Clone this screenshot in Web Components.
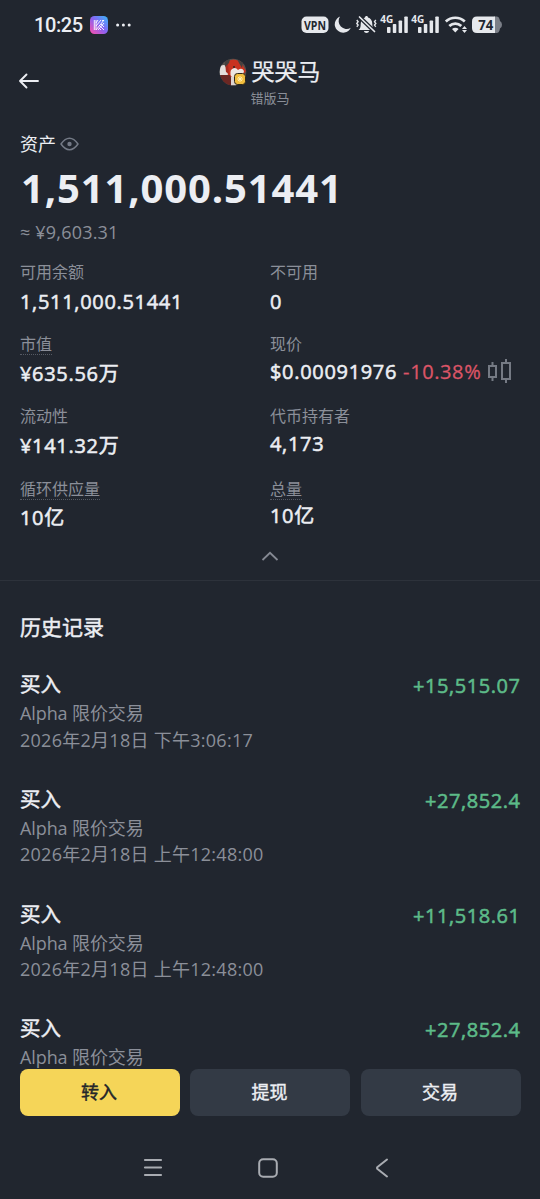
<!DOCTYPE html>
<html lang="zh-CN">
<head>
<meta charset="utf-8">
<title>哭哭马</title>
<style>
  body {
    margin: 0;
    background: #21262f;
  }
</style>
</head>
<body>
<token-page>
  <status-bar slot="top" time="10:25"></status-bar>
  <token-header slot="top" name="哭哭马" subtitle="错版马"></token-header>
  <asset-balance slot="top" amount="1,511,000.51441" fiat="≈ ¥9,603.31">资产</asset-balance>
  <stat-grid slot="top">
    <stat-item label="可用余额" first>1,511,000.51441</stat-item>
    <stat-item label="不可用" first>0</stat-item>
    <stat-item label="市值" hint low>¥635.56万</stat-item>
    <stat-item label="现价" change="-10.38%">$0.00091976</stat-item>
    <stat-item label="流动性" low>¥141.32万</stat-item>
    <stat-item label="代币持有者">4,173</stat-item>
    <stat-item label="循环供应量" hint low>10亿</stat-item>
    <stat-item label="总量" hint high>10亿</stat-item>
  </stat-grid>
  <history-list heading="历史记录">
    <history-row type="买入" source="Alpha 限价交易" date="2026年2月18日 下午3:06:17" amount="+15,515.07"></history-row>
    <history-row type="买入" source="Alpha 限价交易" date="2026年2月18日 上午12:48:00" amount="+27,852.4"></history-row>
    <history-row type="买入" source="Alpha 限价交易" date="2026年2月18日 上午12:48:00" amount="+11,518.61"></history-row>
    <history-row type="买入" source="Alpha 限价交易" date="" amount="+27,852.4"></history-row>
  </history-list>
  <action-bar slot="bottom">
    <action-button primary>转入</action-button>
    <action-button>提现</action-button>
    <action-button>交易</action-button>
  </action-bar>
  <nav-bar slot="bottom"></nav-bar>
</token-page>

<script>
const render = (host, html) => {
  const template = document.createElement("template");
  template.innerHTML = html;
  host.attachShadow({ mode: "open" }).appendChild(template.content.cloneNode(true));
};

class TokenPage extends HTMLElement {
  connectedCallback() {
    render(this, `
      <style>
        :host {
          --text: #eceef3;
          --muted: #8b8f99;
          --green: #5dbb89;
          --red: #dc5567;
          --medium: 0.55px;
          display: flex;
          flex-direction: column;
          height: 1199px;
          overflow: hidden;
          color: var(--text);
          font-family: "Open Sans", "Noto Sans CJK SC", sans-serif;
        }
        main { flex: 1; min-height: 0; overflow: hidden; }
      </style>
      <slot name="top"></slot>
      <main><slot></slot></main>
      <slot name="bottom"></slot>
    `);
  }
}
customElements.define("token-page", TokenPage);

class StatusBar extends HTMLElement {
  connectedCallback() {
    render(this, `
      <style>
        :host {
          display: flex;
          align-items: center;
          justify-content: space-between;
          height: 50px;
          padding: 0 38px 0 34px;
          font-family: Roboto, sans-serif;
        }
        .left { display: flex; align-items: center; }
        .time { font-size: 20px; font-weight: 500; letter-spacing: -0.4px; width: 56px; }
        svg { display: block; flex: none; overflow: visible; }
        .app { margin-right: 8px; }
        text { font-family: "Open Sans", sans-serif; font-weight: 700; }
      </style>
      <div class="left">
        <span class="time">${this.getAttribute("time")}</span>
        <svg class="app" width="18" height="18" viewBox="0 0 18 18">
          <defs>
            <linearGradient id="g" x1="0" y1="1" x2="1" y2="0">
              <stop offset="0" stop-color="#ff4fa8"/>
              <stop offset=".5" stop-color="#8a62f2"/>
              <stop offset="1" stop-color="#35b8fa"/>
            </linearGradient>
          </defs>
          <rect width="18" height="18" rx="4.5" fill="url(#g)"/>
          <path d="M4.3 4v10M6 4v10M8 4l-2 3M11 4L6 10M14 4L6 14M14 7l-6 7M9 9l5 5M11 8l3 3M12 4.5h2M11 14l-2-2" fill="none" stroke="#fff" stroke-width=".9"/>
        </svg>
        <svg width="17" height="4" viewBox="0 0 17 4" fill="#eceef3">
          <circle cx="1.600" cy="2" r="1.500"/><circle cx="7.400" cy="2" r="1.500"/><circle cx="13.200" cy="2" r="1.500"/>
        </svg>
      </div>
      <svg width="202" height="30" viewBox="300 10 202 30" fill="#e6e8ec">
        <rect x="301.500" y="16.500" width="27" height="16.500" rx="5"/>
        <text x="304" y="29.600" font-size="13" textLength="22" lengthAdjust="spacingAndGlyphs" fill="#21262f">VPN</text>
        <path d="M340 16.500a8.400 8.400 0 1 0 10.800 11.300a8 8 0 0 1-10.800-11.300z"/>
        <path d="M358.500 30c1.800-1.400 2.200-3 2.200-6 0-3.500 2-6 4.300-6.500 0-2 3-2 3 0 2.600.6 4.300 3 4.300 6.500 0 3 .5 4.500 2.200 6zM364 31h5c0 2.600-5 2.600-5 0z"/>
        <path d="M359 16.500L375 32" stroke="#21262f" stroke-width="4"/>
        <path d="M359.500 17L374.500 31.500" stroke="#e6e8ec" stroke-width="1.700" stroke-linecap="round"/>
        <path d="M356.800 20l1.300 1.700-1.300 1.700 1.300 1.700-1.300 1.700M375.800 20l-1.300 1.700 1.300 1.700-1.300 1.700 1.300 1.700" fill="none" stroke="#e6e8ec" stroke-width="1.400"/>
        <g>
          <text x="380.300" y="23" font-size="10" textLength="13" lengthAdjust="spacingAndGlyphs">4G</text>
          <rect x="387" y="27" width="3.500" height="6" rx=".8"/>
          <rect x="392.800" y="24" width="3.500" height="9" rx=".8"/>
          <rect x="398.600" y="20.500" width="3.500" height="12.500" rx=".8"/>
          <rect x="404.300" y="16.500" width="3.500" height="16.500" rx=".8"/>
        </g>
        <g transform="translate(31)">
          <text x="380.300" y="23" font-size="10" textLength="13" lengthAdjust="spacingAndGlyphs">4G</text>
          <rect x="387" y="27" width="3.500" height="6" rx=".8"/>
          <rect x="392.800" y="24" width="3.500" height="9" rx=".8"/>
          <rect x="398.600" y="20.500" width="3.500" height="12.500" rx=".8"/>
          <rect x="404.300" y="16.500" width="3.500" height="16.500" rx=".8"/>
        </g>
        <path d="M445.800 21.500c5.500-5 13.500-5 19 0M449.300 26c3.500-3.300 8.500-3.300 12 0" fill="none" stroke="#e6e8ec" stroke-width="2.700"/>
        <path d="M455.300 32.500l-3.300-3.600c2-1.700 4.700-1.700 6.600 0zM464.500 26l2.500 3h-5zM464.500 33l-2.500-3h5z"/>
        <path d="M494 16.500h3q2 0 2.500 2.500l.5 2q2 1 2 3.800t-2 3.800l-.5 2q-.5 2.400-2.500 2.400h-3z" fill="#7b7f88"/>
        <path d="M477 16.500h18v16.500h-18q-5 0-5-5v-6.500q0-5 5-5z"/>
        <text x="478.300" y="30" font-size="14" textLength="15" lengthAdjust="spacingAndGlyphs" fill="#21262f">74</text>
      </svg>
    `);
  }
}
customElements.define("status-bar", StatusBar);

class TokenHeader extends HTMLElement {
  connectedCallback() {
    render(this, `
      <style>
        :host {
          display: grid;
          grid-template-columns: 60px 1fr 60px;
          height: 75px;
        }
        .back { margin: 21px 0 0 18px; }
        .title { display: flex; justify-content: center; gap: 5px; height: 40px; align-items: center; padding-top: 2px; }
        .name { font-size: 23px; line-height: 40px; margin-top: -2px; -webkit-text-stroke: 0.2px; }
        .subtitle { text-align: center; font-size: 13px; line-height: 18px; color: var(--muted); margin-top: -3px; }
        svg { display: block; margin-left: -1px; }
      </style>
      <svg class="back" width="22" height="20" viewBox="0 0 22 20" fill="none" stroke="#eceef3" stroke-width="1.900" stroke-linecap="round" stroke-linejoin="round">
        <path d="M20 10H2M8.500 3.500L2 10l6.500 6.500"/>
      </svg>
      <div>
        <div class="title">
          <svg width="28" height="28" viewBox="0 0 28 28">
            <defs><clipPath id="c"><circle cx="14" cy="14" r="13.300"/></clipPath></defs>
            <g clip-path="url(#c)">
              <rect width="28" height="28" fill="#56504d"/>
              <path d="M8 4Q14-1 22 4l5 9-4 6H8z" fill="#c8321f"/>
              <path d="M0 9q5-4 8 0l1 9-9-1z" fill="#e4dedb"/>
              <path d="M1 17l10 0 3 11-10-2z" fill="#6b2723"/>
              <path d="M6 5l3 1 1 10-3-2z" fill="#a72b20"/>
              <path d="M12 12q4-4 7 0 4-3 6 1l-1 4q-6 2-10 3-4-3-2-8z" fill="#ede6e3"/>
              <path d="M6 3l5-2-1 4-4 4zM18 1l6 4-1 5-3-5z" fill="#45403f"/>
              <path d="M12 19l6-1v10h-6z" fill="#dcd4d1"/>
              <circle cx="15" cy="9" r="1" fill="#2b2422"/>
            </g>
            <rect x="15.500" y="15.500" width="11" height="11" rx="3" fill="#f1bd3e" stroke="#302819"/>
            <path d="M21 18v6M18 21h6M19 19l4 4M23 19l-4 4" stroke="#fff0b8" stroke-width=".9"/>
          </svg>
          <span class="name">${this.getAttribute("name")}</span>
        </div>
        <div class="subtitle">${this.getAttribute("subtitle")}</div>
      </div>
    `);
  }
}
customElements.define("token-header", TokenHeader);

class AssetBalance extends HTMLElement {
  connectedCallback() {
    render(this, `
      <style>
        :host { display: block; height: 133px; padding: 0 20px; }
        .label { display: flex; align-items: center; gap: 5px; height: 36px; font-size: 18px; }
        svg { margin: 2px 0 0 -1px; }
        .amount { font-size: 40px; font-weight: 700; line-height: 54px; letter-spacing: 0.87px; padding-left: 1px; }
        .fiat { font-size: 18px; line-height: 34px; letter-spacing: 0.2px; color: var(--muted); }
      </style>
      <div class="label">
        <slot></slot>
        <svg width="19" height="14" viewBox="0 0 19 14" fill="none" stroke="#747a86" stroke-width="1.500">
          <path d="M1 7Q5 1.300 9.500 1.300T18 7Q14 12.700 9.500 12.700T1 7z" stroke-linejoin="round"/>
          <circle cx="9.500" cy="7" r="2.200" fill="#747a86" stroke="none"/>
        </svg>
      </div>
      <div class="amount">${this.getAttribute("amount")}</div>
      <div class="fiat">${this.getAttribute("fiat")}</div>
    `);
  }
}
customElements.define("asset-balance", AssetBalance);

class StatGrid extends HTMLElement {
  connectedCallback() {
    render(this, `
      <style>
        :host { display: block; height: 322px; border-bottom: 1px solid #2d323b; }
        .grid {
          display: grid;
          grid-template-columns: 250px 250px;
          grid-auto-rows: 72.2px;
          padding: 0 20px;
        }
        .toggle { display: block; margin: 4px auto 0; }
      </style>
      <div class="grid"><slot></slot></div>
      <svg class="toggle" width="18" height="10" viewBox="0 0 18 10" fill="none" stroke="#858993" stroke-width="1.800">
        <path d="M1.500 9L9 1.800 16.500 9"/>
      </svg>
    `);
  }
}
customElements.define("stat-grid", StatGrid);

class StatItem extends HTMLElement {
  connectedCallback() {
    const change = this.getAttribute("change");
    render(this, `
      <style>
        :host { display: block; white-space: nowrap; }
        .label {
          display: inline-block;
          height: 24px;
          line-height: 29px;
          font-size: 16px;
          color: var(--muted);
          border-bottom: 1px dotted transparent;
        }
        :host([hint]) .label { border-color: #555a64; }
        .value {
          display: flex;
          align-items: center;
          height: 30px;
          margin-top: 1px;
          font-size: 20px;
          -webkit-text-stroke: var(--medium);
          letter-spacing: 0.68px;
        }
        :host([first]) .value { margin-top: 3px; }
        :host([low]) .value { margin-top: 2px; }
        :host([high]) .value { margin-top: 0; }
        .change { color: var(--red); margin: 0 6px; letter-spacing: 0.6px; -webkit-text-stroke: 0.3px; }
      </style>
      <div><span class="label">${this.getAttribute("label")}</span></div>
      <div class="value">
        <slot></slot>
        ${change ? `
          <span class="change">${change}</span>
          <svg width="25" height="26" viewBox="0 0 25 26" fill="none" stroke="#757a84" stroke-width="2">
            <path d="M2 8h7v11h-7zM5.500 4v4M5.500 19v4M15 5h8v16h-8zM19 1v4M19 21v4"/>
          </svg>` : ""}
      </div>
    `);
  }
}
customElements.define("stat-item", StatItem);

class HistoryList extends HTMLElement {
  connectedCallback() {
    render(this, `
      <style>
        :host { display: block; padding: 26px 20px 0; }
        h2 { margin: 0 0 22px; font-size: 21px; font-weight: 400; line-height: 40px; -webkit-text-stroke: 0.45px; }
      </style>
      <h2>${this.getAttribute("heading")}</h2>
      <slot></slot>
    `);
  }
}
customElements.define("history-list", HistoryList);

class HistoryRow extends HTMLElement {
  connectedCallback() {
    render(this, `
      <style>
        :host { display: flex; justify-content: space-between; height: 114.8px; }
        .type { font-size: 20.5px; line-height: 31px; -webkit-text-stroke: 0.45px; }
        .meta { font-size: 18px; line-height: 27px; color: var(--muted); letter-spacing: -0.1px; }
        .meta + .meta { margin-top: -0.5px; letter-spacing: 0.27px; }
        .amount { font-size: 20px; line-height: 33px; letter-spacing: 0.57px; margin-right: -0.6px; color: var(--green); -webkit-text-stroke: var(--medium); }
      </style>
      <div>
        <div class="type">${this.getAttribute("type")}</div>
        <div class="meta">${this.getAttribute("source")}</div>
        <div class="meta">${this.getAttribute("date")}</div>
      </div>
      <div class="amount">${this.getAttribute("amount")}</div>
    `);
  }
}
customElements.define("history-row", HistoryRow);

class ActionBar extends HTMLElement {
  connectedCallback() {
    render(this, `
      <style>
        :host { display: flex; gap: 10.5px; padding: 0 19.5px; height: 47.500px; }
      </style>
      <slot></slot>
    `);
  }
}
customElements.define("action-bar", ActionBar);

class ActionButton extends HTMLElement {
  connectedCallback() {
    render(this, `
      <style>
        :host { display: flex; flex: 1; }
        button {
          flex: 1;
          padding: 0 1px 2px 0;
          border: none;
          border-radius: 8px;
          background: #333a45;
          color: var(--text);
          font: 400 18px "Open Sans", "Noto Sans CJK SC", sans-serif;
          -webkit-text-stroke: 0.4px;
        }
        :host([primary]) button { background: #f5d558; color: #24262a; }
      </style>
      <button type="button"><slot></slot></button>
    `);
  }
}
customElements.define("action-button", ActionButton);

class NavBar extends HTMLElement {
  connectedCallback() {
    render(this, `
      <style>
        :host {
          box-sizing: border-box;
          display: flex;
          justify-content: space-between;
          height: 83px;
          padding: 42px 151px 0 143px;
        }
        svg { display: block; }
        .home { margin-right: 3px; }
      </style>
      <svg width="20" height="20" viewBox="0 0 20 20" stroke="#a9acb2" stroke-width="2.200" stroke-linecap="round"><path d="M2 2h16M2 9.500h16M2 17h16"/></svg>
      <svg class="home" width="20" height="20" viewBox="0 0 20 20" fill="none" stroke="#a9acb2" stroke-width="2"><rect x="1.200" y="1.200" width="17.600" height="17.600" rx="4"/></svg>
      <svg width="14" height="20" viewBox="0 0 14 20" fill="none" stroke="#a9acb2" stroke-width="2" stroke-linecap="round" stroke-linejoin="round"><path d="M12 1.500L2.500 9q-1 1 0 2L12 18.500"/></svg>
    `);
  }
}
customElements.define("nav-bar", NavBar);
</script>
</body>
</html>
